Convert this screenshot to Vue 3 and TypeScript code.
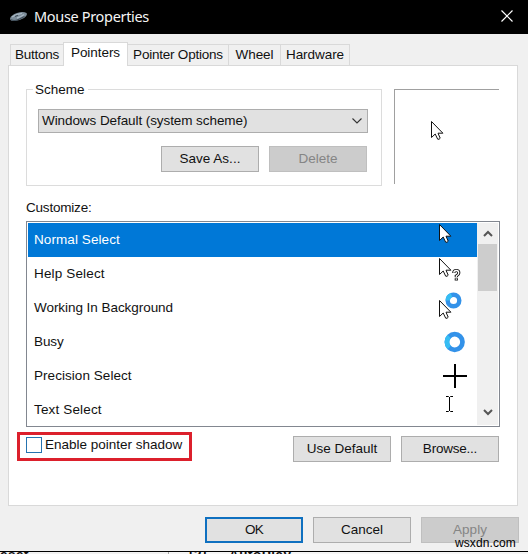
<script setup lang="ts">
import { ref } from 'vue'

interface Tab { label: string; width: number; spacing: number }
interface Pointer { name: string; kind: string; spacing: number }

const tabs: Tab[] = [
  { label: 'Buttons', width: 54, spacing: -0.28 },
  { label: 'Pointers', width: 65, spacing: -0.05 },
  { label: 'Pointer Options', width: 101, spacing: -0.22 },
  { label: 'Wheel', width: 52, spacing: -0.1 },
  { label: 'Hardware', width: 69, spacing: -0.05 },
]
const activeTab = ref('Pointers')

const pointers: Pointer[] = [
  { name: 'Normal Select', kind: 'arrow', spacing: 0.08 },
  { name: 'Help Select', kind: 'help', spacing: 0.15 },
  { name: 'Working In Background', kind: 'working', spacing: -0.05 },
  { name: 'Busy', kind: 'busy', spacing: -0.1 },
  { name: 'Precision Select', kind: 'cross', spacing: 0.05 },
  { name: 'Text Select', kind: 'text', spacing: 0.15 },
]
const selected = ref('Normal Select')
const shadow = ref(false)
const arrowPath = 'M.5 .5V16.5L4.2 13L6.7 18.2Q8.2 18.8 9.2 17.2L7 12.2H11.9Z'
</script>

<template>
  <div class="window">
    <header class="titlebar">
      <svg class="mouse" width="20" height="14" viewBox="0 0 20 14">
        <path d="M1 8.5Q2 5 8 3Q14 1 17.5 3Q19 5 15 8Q10 11 5 11Q1 11 1 8.5Z" fill="#7d8d9a" />
        <path d="M3 7Q7 4 13 3.4M8 8Q12 7 15 4.6" fill="none" stroke="#a9b8c4" stroke-width="1.3" />
        <path d="M2 9.6Q5 11.4 9.5 9.4L15.5 6.6M6 6.4L9 5.2" fill="none" stroke="#3f4d59" stroke-width="1.1" />
      </svg>
      <span class="title">Mouse Properties</span>
      <svg class="close" width="12" height="12" viewBox="0 0 12 12">
        <path d="M.5 .5L11.5 11.5M11.5 .5L.5 11.5" stroke="#fff" stroke-width="1.2" />
      </svg>
    </header>

    <nav class="tabs">
      <button
        v-for="t in tabs" :key="t.label" class="tab" :class="{ active: t.label === activeTab }"
        :style="{ width: t.width + 'px', letterSpacing: t.spacing + 'px' }" @click="activeTab = t.label"
      >{{ t.label }}</button>
    </nav>

    <main class="page">
      <section class="top">
        <div class="group">
          <span class="legend">Scheme</span>
          <div class="combo">
            <span>Windows Default (system scheme)</span>
            <svg width="10" height="6" viewBox="0 0 10 6"><path d="M.5 .5L5 5L9.5 .5" fill="none" stroke="#333" stroke-width="1.1" /></svg>
          </div>
          <div class="scheme-actions">
            <button class="btn">Save As...</button>
            <button class="btn off" disabled>Delete</button>
          </div>
        </div>
        <div class="preview">
          <svg width="13" height="20" viewBox="0 0 13 20"><path :d="arrowPath" fill="#fff" stroke="#111" /></svg>
        </div>
      </section>

      <div class="caption">Customize:</div>
      <div class="listbox">
        <ul class="list">
          <li v-for="p in pointers" :key="p.name" :class="{ sel: p.name === selected }" @click="selected = p.name">
            <span :style="{ letterSpacing: p.spacing + 'px' }">{{ p.name }}</span>
            <svg width="38" height="34" viewBox="0 0 38 34">
              <g v-if="p.kind === 'arrow' || p.kind === 'help'" transform="translate(0 1)">
                <path :d="arrowPath" fill="#fff" stroke="#111" />
              </g>
              <g v-if="p.kind === 'help'" fill="none">
                <path d="M14.8 16Q14.8 13.5 17.3 13.5Q19.8 13.5 19.8 16Q19.8 17.5 17.3 19V20.2M17.3 21.2V23.4" stroke="#111" stroke-width="3.2" />
                <path d="M14.8 15.7Q14.8 13.5 17.3 13.5Q19.8 13.5 19.8 16Q19.8 17.5 17.3 19V20M17.3 21.6V22.8" stroke="#fff" stroke-width="1.3" />
              </g>
              <g v-if="p.kind === 'working'">
                <circle cx="14.5" cy="9.5" r="5.8" fill="none" stroke="#3392e9" stroke-width="4.4" />
                <path d="M8.7 9.5A5.8 5.8 0 0 1 12.5 4.1" fill="none" stroke="#36bdf3" stroke-width="4.4" />
                <path transform="translate(0 9)" :d="arrowPath" fill="#fff" stroke="#111" />
              </g>
              <g v-if="p.kind === 'busy'" fill="none" stroke-width="4.7">
                <circle cx="15.7" cy="17" r="7.8" stroke="#3392e9" />
                <path d="M10.2 22.5A7.8 7.8 0 0 1 10.2 11.5" stroke="#36bdf3" />
              </g>
              <path v-if="p.kind === 'cross'" d="M4 17H28M16 5V29" stroke="#000" stroke-width="2" />
              <path v-if="p.kind === 'text'" d="M7 3.5H9.5L10.5 4.5L11.5 3.5H14M10.5 4V18M7 18.5H9.5L10.5 17.5L11.5 18.5H14" fill="none" stroke="#000" />
            </svg>
          </li>
        </ul>
        <div class="scroll">
          <svg width="10" height="8" viewBox="0 0 10 8"><path d="M1 6L5 2L9 6" fill="none" stroke="#555" stroke-width="2" /></svg>
          <div class="thumb"></div>
          <svg width="10" height="8" viewBox="0 0 10 8"><path d="M1 2L5 6L9 2" fill="none" stroke="#555" stroke-width="2" /></svg>
        </div>
      </div>

      <div class="options">
        <label class="highlight" @click="shadow = !shadow">
          <span class="box"><svg v-if="shadow" viewBox="0 0 14 14"><path d="M2 7L6 11L12 3" fill="none" stroke="#111" /></svg></span>
          <span>Enable pointer shadow</span>
        </label>
        <div class="option-actions">
          <button class="btn">Use Default</button>
          <button class="btn tight">Browse...</button>
        </div>
      </div>
    </main>

    <footer class="footer">
      <button class="btn primary">OK</button>
      <button class="btn">Cancel</button>
      <button class="btn off" disabled>Apply</button>
    </footer>
    <div class="behind">
      <span class="side">eset</span>
      <span class="num">[2]</span>
      <span>AutoPlay</span>
    </div>
    <span class="watermark">wsxdn.com</span>
  </div>
</template>

<style>
body { overflow: hidden; }
</style>
<style scoped>
* { box-sizing: border-box; }
.window { position: relative; width: 528px; height: 554px; overflow: hidden; display: flex; flex-direction: column; background: #f0f0f0; color: #111; font: 13.5px/16px "Liberation Sans", Arial, sans-serif; letter-spacing: 0; white-space: nowrap; }
svg { display: block; flex: none; }
button { margin: 0; padding: 0; font: inherit; color: inherit; letter-spacing: inherit; }
.titlebar { height: 34px; flex: none; display: flex; align-items: center; padding: 0 15px 3px 9px; background: #000; color: #f5f5f5; }
.mouse { margin-top: 3px; }
.title { flex: 1; margin-left: 5px; font: 14.5px/20px "Noto Sans", sans-serif; letter-spacing: -.33px; }
.tabs { position: relative; display: flex; align-items: flex-end; height: 32px; flex: none; padding-left: 10px; margin-bottom: -1px; }
.tab { height: 22px; border: 1px solid #d9d9d9; border-left-width: 0; background: #f0f0f0; }
.tab:first-child { border-left-width: 1px; }
.tab.active { height: 24px; background: #fff; border-left-width: 1px; border-bottom: 0; margin-left: -1px; padding-bottom: 3px; }
.page { width: 510px; height: 441px; flex: none; margin-left: 8px; padding: 23px 0 0 17px; background: #fff; border: 1px solid #d9d9d9; display: flex; flex-direction: column; }
.top { display: flex; gap: 12px; height: 97px; }
.group { position: relative; width: 356px; height: 97px; border: 1px solid #dcdcdc; padding: 19px 0 0 11px; }
.legend { position: absolute; left: 6px; top: -8px; padding: 0 3px 0 2px; background: #fff; }
.combo { width: 330px; height: 24px; display: flex; align-items: center; justify-content: space-between; padding: 0 5px 0 3px; border: 1px solid #adadad; background: #e1e1e1; letter-spacing: -.08px; }
.scheme-actions { display: flex; gap: 10px; margin: 13px 0 0 123px; }
.btn { width: 98px; height: 26px; border: 1px solid #adadad; background: #e1e1e1; }
.btn.tight { letter-spacing: -.22px; }
.btn.off { background: #ccc; border-color: #bfbfbf; color: #858585; }
.btn.primary { border: 2px solid #0f70c0; letter-spacing: -.7px; }
.preview { width: 105px; height: 95px; border: solid #a0a0a0; border-width: 1px 0 0 1px; padding: 31px 0 0 36px; }
.caption { margin-top: 13px; height: 22px; line-height: 18px; letter-spacing: -.2px; }
.listbox { display: flex; width: 474px; height: 206px; padding: 1px; border: 1px solid #828790; }
.list { width: 449px; height: 202px; margin: 0; padding: 0; overflow: hidden; list-style: none; }
.list li { height: 34px; display: flex; align-items: center; justify-content: space-between; padding-left: 6px; }
.list li.sel { background: #0078d7; color: #fff; }
.scroll { width: 21px; display: flex; flex-direction: column; align-items: center; background: #f0f0f0; padding: 7px 0 9px; }
.thumb { width: 19px; height: 47px; margin: 6px 0 auto; background: #cdcdcd; }
.options { display: flex; margin: 5px 0 0 -9px; }
.highlight { width: 175px; height: 29px; display: flex; gap: 3px; border: 3px solid #dc202c; padding: 2px 0 0 6px; }
.box { width: 16px; height: 16px; border: 1px solid #2573b0; background: #fff; }
.option-actions { display: flex; gap: 10px; margin: 4px 0 0 101px; }
.footer { display: flex; gap: 10px; height: 45px; flex: none; padding: 11px 0 0 205px; }
.behind { display: flex; height: 3px; flex: none; overflow: hidden; border-top: 1px solid #000; background: #f6f6f6; line-height: 6px; font-weight: bold; letter-spacing: .5px; }
.side { width: 169px; border-right: 1px solid #aaa; background: #f2f2f2; }
.num { width: 40px; margin-left: 20px; }
.watermark { position: absolute; left: 455px; top: 535px; color: #000; font-size: 12px; letter-spacing: .1px; }
</style>
